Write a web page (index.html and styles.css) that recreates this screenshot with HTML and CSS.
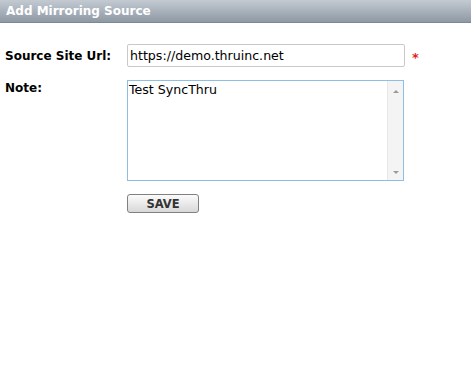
FILE: index.html
```html
<!DOCTYPE html>
<html lang="en">
<head>
    <meta charset="UTF-8">
    <title>Add Mirroring Source</title>
    <link rel="stylesheet" href="styles.css">
</head>
<body>
    <div class="title">Add Mirroring Source</div>
    <div class="form">
        <div class="row">
            <label class="lbl">Source Site Url:</label>
            <div class="field">
                <input class="txt" type="text" value="https://demo.thruinc.net">
                <span class="req">*</span>
            </div>
        </div>
        <div class="row">
            <label class="lbl lbl-top">Note:</label>
            <div class="field">
                <div class="area">
                    <div class="area-text">Test SyncThru</div>
                    <div class="scroll">
                        <span class="arr up"></span>
                        <span class="arr down"></span>
                    </div>
                </div>
            </div>
        </div>
        <div class="row">
            <span class="lbl"></span>
            <div class="field">
                <button class="save">SAVE</button>
            </div>
        </div>
    </div>
</body>
</html>
```

FILE: styles.css
```css
*{
    margin: 0;
    padding: 0;
    box-sizing: border-box;
}
body{
    font-family: "DejaVu Sans", Verdana, sans-serif;
    background: #fff;
    color: #000;
}
.title{
    height: 23px;
    padding: 4px 6px 0;
    font-size: 12px;
    font-weight: bold;
    color: #fff;
    background: linear-gradient(#c3cad2, #8e99a4);
    border-bottom: 1px solid #7d8893;
}
.form{
    padding: 21px 0 0 5px;
}
.row{
    display: flex;
    margin-bottom: 13px;
}
.lbl{
    width: 122px;
    font-size: 12px;
    font-weight: bold;
    padding-top: 5px;
}
.lbl-top{
    padding-top: 1px;
}
.field{
    display: flex;
    align-items: flex-start;
}
.txt{
    width: 278px;
    height: 23px;
    border: 1px solid #c9c9c9;
    border-radius: 2px;
    padding: 0 2px;
    font-family: "DejaVu Sans", Verdana, sans-serif;
    font-size: 12.6px;
    color: #000;
    outline: none;
}
.req{
    color: #e21f1f;
    font-weight: bold;
    font-size: 13px;
    margin: 6px 0 0 7px;
}
.area{
    width: 277px;
    height: 101px;
    border: 1px solid #8ebee2;
    display: flex;
}
.area-text{
    flex: 1;
    font-size: 12.6px;
    padding: 1px 1px;
}
.scroll{
    width: 16px;
    background: #f4f4f4;
    border-left: 1px solid #e8e8e8;
    display: flex;
    flex-direction: column;
    justify-content: space-between;
    align-items: center;
    padding: 9px 0 6px;
}
.arr{
    width: 0;
    height: 0;
    border-left: 3px solid transparent;
    border-right: 3px solid transparent;
}
.arr.up{
    border-bottom: 3px solid #9a9a9a;
}
.arr.down{
    border-top: 3px solid #9a9a9a;
}
.save{
    width: 72px;
    height: 19px;
    border: 1px solid #808080;
    border-radius: 3px;
    background: linear-gradient(#fbfbfb, #d8d8d8);
    font-family: "DejaVu Sans", Verdana, sans-serif;
    font-size: 11.5px;
    font-weight: bold;
    color: #333;
}
```
